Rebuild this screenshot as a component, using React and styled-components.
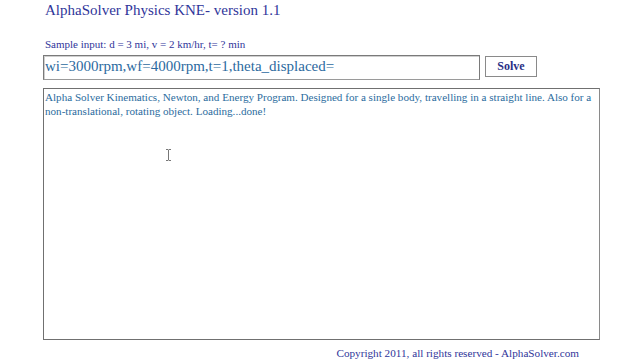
import styled, { createGlobalStyle } from "styled-components"

const Global = createGlobalStyle`
  html, body {
    margin: 0;
    padding: 0;
    background: #ffffff;
  }
  body {
    font-family: "Liberation Serif", "Times New Roman", serif;
  }
`

const Page = styled.div`
  position: relative;
  width: 640px;
  height: 360px;
  box-sizing: border-box;
  padding: 0 40px 0 43px;
  display: flex;
  flex-direction: column;
`

const Title = styled.h1`
  margin: 0 0 0 2px;
  font-size: 15px;
  font-weight: normal;
  line-height: 20px;
  color: #30359a;
`

const Hint = styled.p`
  margin: 17px 0 0 2px;
  font-size: 11px;
  line-height: 14px;
  color: #30359a;
`

const InputRow = styled.div`
  display: flex;
  align-items: flex-start;
  gap: 5px;
  margin-top: 4px;
`

const Field = styled.input`
  width: 437px;
  height: 25px;
  box-sizing: border-box;
  border: 1px solid #7a7a7a;
  border-bottom-color: #9a9a9a;
  box-shadow: inset 1px 1px 0 #cfcfcf;
  padding: 0 0 2px 1px;
  font-family: "Liberation Serif", "Times New Roman", serif;
  font-size: 15px;
  color: #2c6aa0;
  outline: none;
  background: #fff;
`

const SolveButton = styled.button`
  margin-top: 1px;
  width: 52px;
  height: 21px;
  box-sizing: border-box;
  border: 1px solid #8a8a8a;
  background: #ffffff;
  font-family: "Liberation Serif", "Times New Roman", serif;
  font-size: 12px;
  font-weight: bold;
  color: #2a2f85;
  padding: 0;
`

const Output = styled.textarea`
  margin-top: 8px;
  width: 557px;
  height: 252px;
  box-sizing: border-box;
  border: 1px solid #707070;
  border-right-color: #8a8a8a;
  padding: 2px 1px;
  resize: none;
  font-family: "Liberation Serif", "Times New Roman", serif;
  font-size: 11.1px;
  line-height: 13.5px;
  color: #2b6c9e;
  outline: none;
  background: #fff;
`

const Footer = styled.div`
  margin-top: 6px;
  width: 536px;
  text-align: right;
  font-size: 11.2px;
  line-height: 14px;
  color: #30359a;
`

const Cursor = styled.svg`
  position: absolute;
  left: 165px;
  top: 149px;
`

const description =
  "Alpha Solver Kinematics, Newton, and Energy Program. Designed for a single body, travelling in a straight line. Also for a non-translational, rotating object. Loading...done!"

export default function App() {
  return (
    <>
      <Global />
      <Page>
        <Title>AlphaSolver Physics KNE- version 1.1</Title>
        <Hint>Sample input: d = 3 mi, v = 2 km/hr, t= ? min</Hint>
        <InputRow>
          <Field readOnly value="wi=3000rpm,wf=4000rpm,t=1,theta_displaced=" />
          <SolveButton>Solve</SolveButton>
        </InputRow>
        <Output readOnly value={description} />
        <Footer>Copyright 2011, all rights reserved - AlphaSolver.com</Footer>
        <Cursor width="7" height="12" viewBox="0 0 7 12">
          <path d="M1 0.5h2l0.5 0.5 0.5-0.5h2M3.5 1v10M1 11.5h2l0.5-0.5 0.5 0.5h2" stroke="#777" strokeWidth="1" fill="none" />
        </Cursor>
      </Page>
    </>
  )
}
